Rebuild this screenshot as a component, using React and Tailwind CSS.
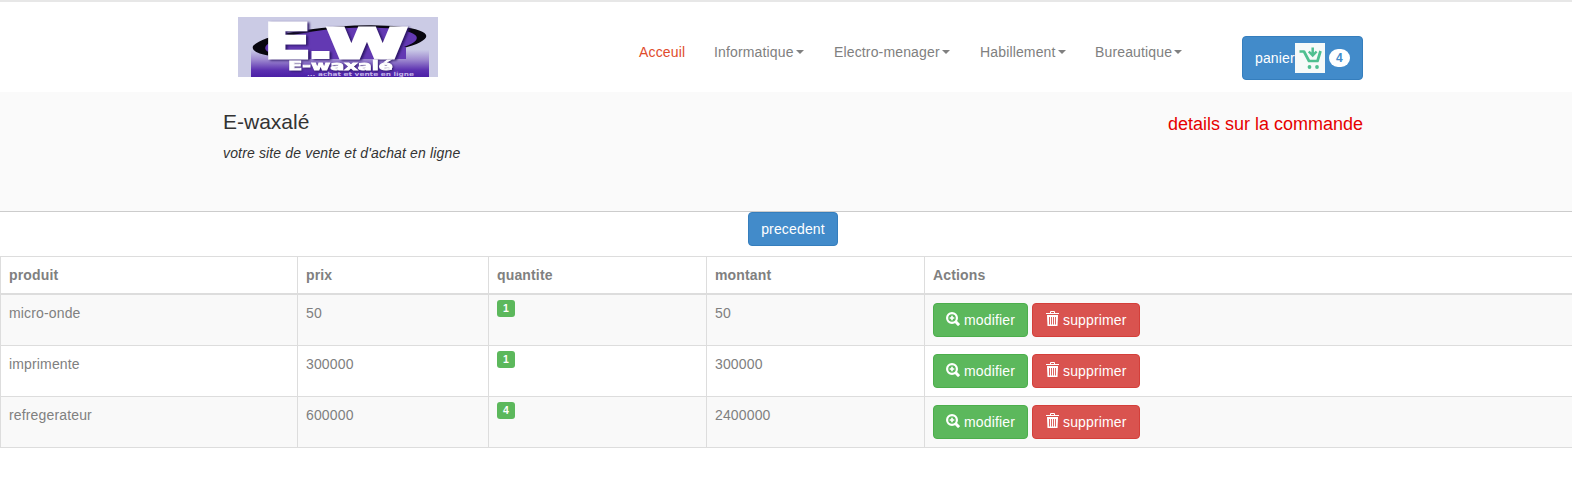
import React from "react";

const menu = ["Informatique", "Electro-menager", "Habillement", "Bureautique"];
const rows = [
  ["micro-onde", "50", "1", "50"],
  ["imprimente", "300000", "1", "300000"],
  ["refregerateur", "600000", "4", "2400000"],
];

function Logo() {
  return (
    <svg className="block h-[60px] w-[200px] overflow-visible tracking-normal" viewBox="0 0 200 60">
      <defs>
        <linearGradient id="band" x1="0" y1="0" x2="0" y2="1">
          <stop offset="0" stopColor="#c9c9e6" />
          <stop offset="0.35" stopColor="#9f8bd0" />
          <stop offset="0.75" stopColor="#5b30b0" />
          <stop offset="1" stopColor="#4a1fa6" />
        </linearGradient>
      </defs>
      <rect width="200" height="60" fill="#cbcbe5" />
      <rect x="13" y="33" width="178" height="27" fill="url(#band)" />
      <ellipse cx="101.500" cy="25" rx="87" ry="15.500" fill="#08060f" transform="rotate(-4 101 25)" />
      <ellipse cx="103" cy="26" rx="76" ry="14.500" fill="#6339b3" transform="rotate(-4 103 26)" />
      <path d="M30 30h138v12H30z" fill="#6339b3" />
      <g fontFamily="DejaVu Sans" fontWeight="bold" fill="#fff" stroke="#fff">
        <g strokeWidth="3" className="drop-shadow-[2px_1px_1px_#2d1768]">
          <text x="26" y="40.500" fontSize="48" textLength="47" lengthAdjust="spacingAndGlyphs">E</text>
          <rect x="75" y="35.500" width="15" height="5" />
          <text x="89" y="40.500" fontSize="40" textLength="80" lengthAdjust="spacingAndGlyphs">W</text>
        </g>
        <text className="drop-shadow-[1px_1px_1px_#2d1768]" x="50" y="53" fontSize="13" strokeWidth="0.8" textLength="105" lengthAdjust="spacingAndGlyphs">E-waxalé</text>
        <text x="69" y="59" fontSize="5.500" textLength="107" lengthAdjust="spacingAndGlyphs" fill="#c3b3e8" stroke="none">... achat et vente en ligne</text>
      </g>
    </svg>
  );
}

function CartIcon() {
  return (
    <svg className="h-[30px] w-[30px] shrink-0 bg-[#f6faf9]" viewBox="0 0 30 30" fill="none" stroke="#4fbf90" strokeWidth="2.700">
      <path d="M4.500 8.500h4.500l5 9.500h8.500l3-10" strokeLinejoin="round" />
      <path d="M17.700 4.500v7.500M13.800 8.500l3.900 4 3.900-4" strokeWidth="2.500" />
      <circle cx="14.500" cy="24" r="1.900" fill="#4fbf90" stroke="none" />
      <circle cx="22" cy="24" r="1.900" fill="#4fbf90" stroke="none" />
    </svg>
  );
}

function ZoomIcon() {
  return (
    <svg className="mb-0.5 mr-1 h-[14px] w-[14px] shrink-0" viewBox="0 0 14 14" fill="none" stroke="#fff">
      <circle cx="6" cy="6" r="4.900" strokeWidth="2.200" />
      <path d="M9.500 9.500l3.600 3.600" strokeWidth="3" />
      <path d="M3.700 6h4.600M6 3.700v4.600" strokeWidth="1.600" />
    </svg>
  );
}

function TrashIcon() {
  return (
    <svg className="mb-[3px] mr-1 h-[15px] w-[13px] shrink-0" viewBox="0 0 13 15" fill="none" stroke="#fff">
      <path d="M0 2.500h13M4.500 2.500v-2h4v2" />
      <path d="M1 4h11v1l-.5 10h-10L1 5z" fill="#fff" stroke="none" />
      <path d="M3.500 6v7.500M5.500 6v7.500M7.500 6v7.500M9.500 6v7.500" stroke="#d9534f" strokeWidth="0.900" />
    </svg>
  );
}

export default function App() {
  return (
    <div className="h-[489px] overflow-hidden bg-white font-['Liberation_Sans',Arial,sans-serif] text-[14px] leading-5 tracking-[0.15px] text-[#808080]">
      <header className="h-[92px] border-t-2 border-[#e7e7e7]">
        <div className="ml-[216px] flex w-[1147px] items-start pl-[22px]">
          <div className="mt-[15px] w-[401px] shrink-0"><Logo /></div>
          <nav className="mt-10 grid w-[603px] shrink-0 grid-cols-[75px_120px_146px_115px_auto] whitespace-nowrap">
            <a className="text-[#e04c2c]">Acceuil</a>
            {menu.map((m) => (
              <a key={m} className="flex items-center">
                {m}
                <span className="ml-0.5 border-x-4 border-t-4 border-x-transparent border-t-[#808080]" />
              </a>
            ))}
          </nav>
          <button className="mt-[34px] flex h-11 w-[121px] shrink-0 items-center rounded border border-[#357ebd] bg-[#428bca] pl-3 text-white">
            panier
            <CartIcon />
            <span className="ml-1 flex h-[18px] w-[21px] items-center justify-center rounded-[10px] bg-white text-xs font-bold text-[#428bca]">4</span>
          </button>
        </div>
      </header>
      <section className="h-[120px] border-b border-[#ccc] bg-[#fafafa]">
        <div className="ml-[216px] flex w-[1147px] justify-between pl-[7px]">
          <div className="text-[#333]">
            <h1 className="mt-[18px] text-[21px] leading-6 tracking-normal">E-waxalé</h1>
            <p className="mt-[9px] italic">votre site de vente et d'achat en ligne</p>
          </div>
          <p className="mt-[22px] text-lg leading-5 tracking-normal text-[#e60000]">details sur la commande</p>
        </div>
      </section>
      <div className="flex h-11 items-start pl-[748px]">
        <button className="h-[34px] w-[90px] rounded border border-[#357ebd] bg-[#428bca] text-white">precedent</button>
      </div>
      <table className="w-[1573px] table-fixed border-separate border-spacing-0 border-l border-t border-[#ddd]">
        <colgroup>
          <col className="w-[297px]" />
          <col className="w-[191px]" />
          <col className="w-[218px]" />
          <col className="w-[218px]" />
          <col />
        </colgroup>
        <thead>
          <tr className="h-[38px] text-left">
            {["produit", "prix", "quantite", "montant", "Actions"].map((h) => (
              <th key={h} className="border-b-2 border-r border-[#ddd] p-0 pl-2 font-bold">{h}</th>
            ))}
          </tr>
        </thead>
        <tbody>
          {rows.map(([name, price, qty, total]) => (
            <tr key={name} className="h-[51px] align-top odd:bg-[#f9f9f9]">
              <td className="border-b border-r border-[#ddd] p-0 pl-2 pt-2">{name}</td>
              <td className="border-b border-r border-[#ddd] p-0 pl-2 pt-2">{price}</td>
              <td className="border-b border-r border-[#ddd] p-0 pl-2 pt-[5px]">
                <span className="flex h-[17px] w-[18px] items-center justify-center rounded-[3px] bg-[#5cb85c] text-[10.5px] font-bold leading-none text-white">{qty}</span>
              </td>
              <td className="border-b border-r border-[#ddd] p-0 pl-2 pt-2">{total}</td>
              <td className="border-b border-r border-[#ddd] p-0 pl-2 pt-2">
                <div className="flex gap-1 text-white">
                  <button className="flex h-[34px] w-[95px] items-center rounded border border-[#4cae4c] bg-[#5cb85c] pl-3"><ZoomIcon />modifier</button>
                  <button className="flex h-[34px] w-[108px] items-center rounded border border-[#d43f3a] bg-[#d9534f] pl-[13px]"><TrashIcon />supprimer</button>
                </div>
              </td>
            </tr>
          ))}
        </tbody>
      </table>
    </div>
  );
}
